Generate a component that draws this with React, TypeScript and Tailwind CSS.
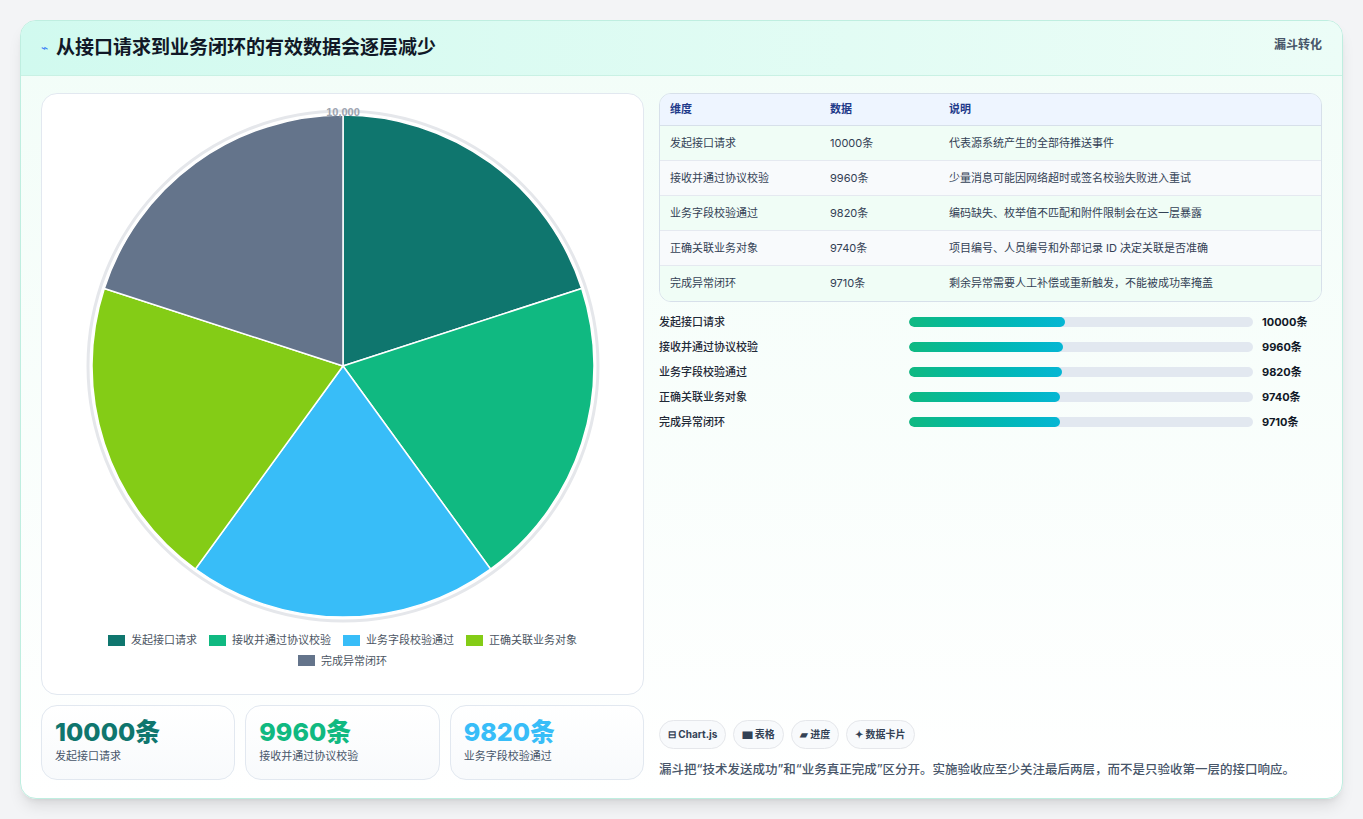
import React from "react";

const rows = [
  { name: "发起接口请求", v: 10000, note: "代表源系统产生的全部待推送事件", w: 45.3 },
  { name: "接收并通过协议校验", v: 9960, note: "少量消息可能因网络超时或签名校验失败进入重试", w: 44.8 },
  { name: "业务字段校验通过", v: 9820, note: "编码缺失、枚举值不匹配和附件限制会在这一层暴露", w: 44.5 },
  { name: "正确关联业务对象", v: 9740, note: "项目编号、人员编号和外部记录 ID 决定关联是否准确", w: 44.0 },
  { name: "完成异常闭环", v: 9710, note: "剩余异常需要人工补偿或重新触发，不能被成功率掩盖", w: 44.0 },
];
const colors = ["#0f766e", "#10b981", "#38bdf8", "#84cc16", "#64748b"];

function Pie() {
  const cx = 300, cy = 272, r = 251;
  const slices = colors.map((c, i) => {
    const a0 = ((i * 72 - 90) * Math.PI) / 180;
    const a1 = (((i + 1) * 72 - 90) * Math.PI) / 180;
    const d = `M${cx},${cy} L${cx + r * Math.cos(a0)},${cy + r * Math.sin(a0)} A${r},${r} 0 0 1 ${cx + r * Math.cos(a1)},${cy + r * Math.sin(a1)} Z`;
    return <path key={i} d={d} fill={c} stroke="#fff" strokeWidth="1.5" />;
  });
  return (
    <svg width="600" height="530" viewBox="0 0 600 530">
      <circle cx={cx} cy={cy} r={255} fill="none" stroke="#e5e7eb" strokeWidth="3" />
      {slices}
      <text x={cx} y={22} textAnchor="middle" fontSize="11" fontWeight="700" fill="#9ca3af" fontFamily="Liberation Sans, sans-serif">10,000</text>
    </svg>
  );
}

export default function App() {
  return (
    <div className="min-h-screen bg-[#f3f4f6] p-5" style={{ fontFamily: "Inter, 'Noto Sans CJK SC', sans-serif" }}>
      <div className="rounded-2xl border border-[#bfeee0] bg-gradient-to-b from-[#f2fdf8] to-white shadow-lg overflow-hidden h-[779px]">
        <div className="flex items-center justify-between h-[55px] px-5 bg-gradient-to-r from-[#d1faef] to-[#ecfdf7] border-b border-[#c9f1e4]">
          <div className="flex items-center gap-2">
            <span className="text-[#3b82f6] text-xs">⌁</span>
            <h1 className="text-[19px] font-bold text-[#111827]">从接口请求到业务闭环的有效数据会逐层减少</h1>
          </div>
          <span className="text-xs font-bold text-[#475569] self-start mt-4">漏斗转化</span>
        </div>
        <div className="flex gap-[15px] px-5 pt-[17px]">
          <div className="w-[603px] flex flex-col gap-[10px]">
            <div className="h-[602px] rounded-2xl border border-[#e2e8f0] bg-white flex flex-col items-center">
              <Pie />
              <div className="flex flex-wrap justify-center gap-x-3 gap-y-1 text-[11px] text-[#4b5563] px-10 mt-[8px]">
                {rows.map((r, i) => (
                  <span key={i} className="flex items-center gap-1.5">
                    <span className="w-[17px] h-[11px]" style={{ background: colors[i] }} />
                    {r.name}
                  </span>
                ))}
              </div>
            </div>
            <div className="grid grid-cols-3 gap-[10px]">
              {rows.slice(0, 3).map((r, i) => (
                <div key={i} className="h-[75px] rounded-2xl border border-[#e2e8f0] bg-gradient-to-b from-white to-[#f8fafc] px-[13px] pt-[10px]">
                  <div className="text-[25px] font-extrabold leading-8" style={{ color: ["#0f766e", "#10b981", "#38bdf8"][i] }}>{r.v}条</div>
                  <div className="text-[11px] text-[#475569]">{r.name}</div>
                </div>
              ))}
            </div>
          </div>
          <div className="flex-1 flex flex-col">
            <div className="rounded-xl border border-[#d7e0ea] overflow-hidden text-[11px] text-[#334155]">
              <div className="flex h-[32px] items-center bg-[#eef5ff] border-b border-[#d7e0ea] font-bold text-[#1e3a8a] px-[10px]">
                <span className="w-[160px]">维度</span><span className="w-[119px]">数据</span><span>说明</span>
              </div>
              {rows.map((r, i) => (
                <div key={i} className={`flex h-[35px] items-center px-[10px] ${i % 2 ? "bg-[#f8fafc]" : "bg-[#f0fdf6]"} ${i < 4 ? "border-b border-[#e5e9f0]" : ""}`}>
                  <span className="w-[160px]">{r.name}</span><span className="w-[119px]">{r.v}条</span><span>{r.note}</span>
                </div>
              ))}
            </div>
            <div className="flex flex-col gap-[9px] mt-[12px]">
              {rows.map((r, i) => (
                <div key={i} className="flex items-center h-[16px] text-[11px]">
                  <span className="w-[250px] text-[#1f2937] font-medium">{r.name}</span>
                  <div className="w-[344px] h-[10px] rounded-full bg-[#e2e8f0] overflow-hidden">
                    <div className="h-full rounded-full bg-gradient-to-r from-[#10b981] to-[#06b6d4]" style={{ width: `${r.w}%` }} />
                  </div>
                  <span className="ml-[9px] font-bold text-[#111827]">{r.v}条</span>
                </div>
              ))}
            </div>
            <div className="flex gap-[7px] mt-[290px] text-[10px] font-bold text-[#334155]">
              {["⊟ Chart.js", "▆ 表格", "▰ 进度", "✦ 数据卡片"].map((t) => (
                <span key={t} className="h-[29px] px-[8px] flex items-center rounded-full border border-[#e5e7eb] bg-[#f8fafc]">{t}</span>
              ))}
            </div>
            <p className="mt-[12px] text-[12.5px] text-[#475569] font-medium">漏斗把“技术发送成功”和“业务真正完成”区分开。实施验收应至少关注最后两层，而不是只验收第一层的接口响应。</p>
          </div>
        </div>
      </div>
    </div>
  );
}
